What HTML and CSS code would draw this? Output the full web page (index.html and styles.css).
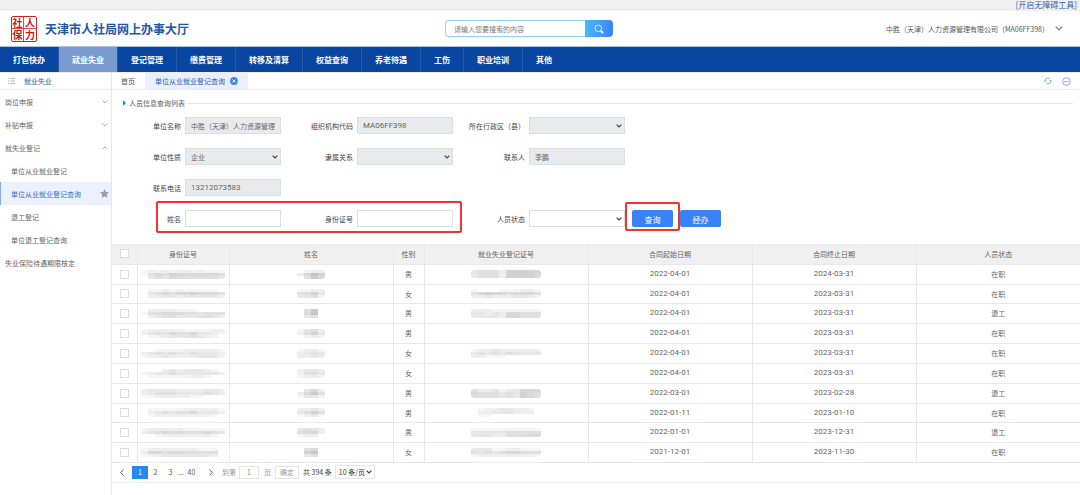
FILE: index.html
```html
<!DOCTYPE html>
<html lang="zh-CN">
<head>
<meta charset="utf-8">
<title>天津市人社局网上办事大厅</title>
<link rel="stylesheet" href="styles.css">
</head>
<body>
<div class="topbar"><a href="#">[开启无障碍工具]</a></div>
<header class="header">
  <div class="seal"><span>社</span><span>人</span><span>保</span><span>力</span></div>
  <h1 class="title">天津市人社局网上办事大厅</h1>
  <form class="search">
    <input type="text" aria-label="搜索" placeholder="请输入您要搜索的内容">
    <button type="button" aria-label="搜索"><svg viewBox="0 0 10 10" width="10" height="10"><circle cx="4.3" cy="4.3" r="3.3" fill="none" stroke="#d5ecff" stroke-width="1"/><path d="M6.8 6.8L9 9" stroke="#fff" stroke-width="1.8"/></svg></button>
  </form>
  <button class="account" type="button">中胜（天津）人力资源管理有限公司（MA06FF398）<svg viewBox="0 0 8 5" width="8" height="5"><path d="M.7.7L4 4 7.3.7" fill="none" stroke="#777" stroke-width="1.1"/></svg></button>
</header>
<nav class="nav">
  <a href="#">打包快办</a><a href="#" class="active">就业失业</a><a href="#">登记管理</a><a href="#">缴费管理</a><a href="#">转移及清算</a><a href="#">权益查询</a><a href="#">养老待遇</a><a href="#">工伤</a><a href="#">职业培训</a><a href="#">其他</a>
</nav>
<div class="layout">
  <aside class="sidebar">
    <div class="side-head"><svg viewBox="0 0 7 6" width="7" height="6"><path d="M0 .5h1.4M2.4.5H7M0 3h1.4M2.4 3H7M0 5.5h1.4M2.4 5.5H7" stroke="#9aa6c0" stroke-width=".8"/></svg><a href="#">就业失业</a></div>
    <a class="item" href="#">岗位申报<svg viewBox="0 0 6 4" width="6" height="4"><path d="M.5.5L3 3 5.5.5"/></svg></a>
    <a class="item" href="#">补贴申报<svg viewBox="0 0 6 4" width="6" height="4"><path d="M.5.5L3 3 5.5.5"/></svg></a>
    <a class="item" href="#">就失业登记<svg class="open" viewBox="0 0 6 4" width="6" height="4"><path d="M1 3L3 1 5 3"/></svg></a>
    <a class="item sub" href="#">单位从业就业登记</a>
    <a class="item sub current" href="#">单位从业就业登记查询<svg class="star" viewBox="0 0 10 10" width="9" height="9"><path d="M5 0L6.5 3.2 10 3.7 7.5 6.2 8.1 9.8 5 8.1 1.9 9.8 2.5 6.2 0 3.7 3.5 3.2Z"/></svg></a>
    <a class="item sub" href="#">退工登记</a>
    <a class="item sub" href="#">单位退工登记查询</a>
    <a class="item" href="#">失业保险待遇期限核定</a>
  </aside>
  <main class="main">
    <div class="tabs">
      <a class="home" href="#">首页</a>
      <a class="tab" href="#">单位从业就业登记查询<svg viewBox="0 0 8 8" width="8" height="8"><circle cx="4" cy="4" r="3.9" fill="#3d84f0"/><path d="M2.6 2.6l2.8 2.8M5.4 2.6L2.6 5.4" stroke="#fff" stroke-width=".9"/></svg></a>
      <div class="tools">
        <button type="button" aria-label="刷新"><svg viewBox="0 0 8 8" width="8" height="8"><path d="M1.2 4.8A2.9 2.9 0 0 1 5.6 1.6M6.8 3.2A2.9 2.9 0 0 1 2.4 6.4" fill="none" stroke="#6f98f0" stroke-width=".9"/><path d="M0 4.6h2.4L1.2 3.2ZM5.6 3.4H8L6.8 4.8Z" fill="#6f98f0"/></svg></button>
        <button type="button" aria-label="更多"><svg viewBox="0 0 10 10" width="9" height="9"><circle cx="5" cy="5" r="4.3" fill="none" stroke="#6f98f0" stroke-width=".9"/><path d="M2.4 5h1.3M4.4 5h1.3M6.3 5h1.3" stroke="#6f98f0" stroke-width="1.2"/></svg></button>
      </div>
    </div>
    <h2 class="section"><svg viewBox="0 0 3 6" width="3" height="6"><path d="M0 0l3 3-3 3z" fill="#2588ee"/></svg>人员信息查询列表</h2>
    <form class="query">
      <label for="f1">单位名称</label><input id="f1" type="text" value="中胜（天津）人力资源管理有限公司" disabled>
      <label for="f2">组织机构代码</label><input id="f2" type="text" class="latin" value="MA06FF398" disabled>
      <label for="f3">所在行政区（县）</label><div class="pick"><select id="f3" disabled><option></option></select><svg viewBox="0 0 6 4" width="6" height="4"><path d="M.6.6L3 3 5.4.6"/></svg></div>
      <label for="f4" class="first">单位性质</label><div class="pick"><select id="f4" disabled><option>企业</option></select><svg viewBox="0 0 6 4" width="6" height="4"><path d="M.6.6L3 3 5.4.6"/></svg></div>
      <label for="f5">隶属关系</label><div class="pick"><select id="f5" disabled><option></option></select><svg viewBox="0 0 6 4" width="6" height="4"><path d="M.6.6L3 3 5.4.6"/></svg></div>
      <label for="f6">联系人</label><input id="f6" type="text" value="李鹏" disabled>
      <label for="f7" class="first">联系电话</label><input id="f7" type="text" class="latin" value="13212073583" disabled>
      <label for="f8" class="first">姓名</label><input id="f8" type="text">
      <label for="f9">身份证号</label><input id="f9" type="text">
      <label for="f10">人员状态</label><div class="pick"><select id="f10"><option></option></select><svg viewBox="0 0 6 4" width="6" height="4"><path d="M.6.6L3 3 5.4.6"/></svg></div>
      <div class="actions"><button type="button">查询</button><button type="button">经办</button></div>
      <i class="mark mark-fields"></i><i class="mark mark-button"></i>
    </form>
    <table class="grid">
      <colgroup><col class="c-check"><col class="c-id"><col><col class="c-sex"><col><col><col><col></colgroup>
      <thead><tr><th><input type="checkbox" aria-label="全选"></th><th>身份证号</th><th>姓名</th><th>性别</th><th>就业失业登记证号</th><th>合同起始日期</th><th>合同终止日期</th><th>人员状态</th></tr></thead>
      <tbody id="rows"></tbody>
    </table>
    <div class="pager">
      <button class="arrow" type="button" aria-label="上一页"><svg viewBox="0 0 4 7" width="4" height="7"><path d="M3.4.6L.7 3.5l2.7 2.9"/></svg></button>
      <a class="page on" href="#">1</a><a class="page" href="#">2</a><a class="page" href="#">3</a><span class="dots">...</span><a class="page" href="#">40</a>
      <button class="arrow next" type="button" aria-label="下一页"><svg viewBox="0 0 4 7" width="4" height="7"><path d="M.6.6l2.7 2.9L.6 6.4"/></svg></button>
      <label for="jump">到第</label><input id="jump" type="text" value="1"><span class="unit">页</span>
      <button class="go" type="button">确定</button>
      <span class="total">共 394 条</span>
      <div class="pick size"><select aria-label="每页条数"><option>10 条/页</option></select><svg viewBox="0 0 6 4" width="6" height="4"><path d="M.6.6L3 3 5.4.6"/></svg></div>
    </div>
  </main>
</div>
<script src="rows.js"></script>
</body>
</html>
```

FILE: styles.css
```css
* { box-sizing: border-box; }
body {
  margin: 0;
  min-height: 100vh;
  display: flex;
  flex-direction: column;
  background: #fff;
  color: #555;
  font: 7px/10px "Noto Sans CJK SC", sans-serif;
}
a { color: inherit; text-decoration: none; }
button, input, select { font: inherit; color: inherit; margin: 0; padding: 0; border-radius: 0; outline: 0; }
button { border: 0; background: none; cursor: pointer; }
svg { display: block; flex: none; }

.topbar { height: 11px; padding-right: 3px; background: #f0f0f0; color: #2a62ae; font-size: 8px; line-height: 9px; text-align: right; }

.header { height: 36px; display: flex; align-items: center; padding: 0 17px 0 11px; border-bottom: 1px solid #a9c1de; }
.seal { width: 26px; height: 26px; display: grid; grid-template-columns: 1fr 1fr; grid-template-rows: 1fr 1fr; border: 1px solid #cf2222; border-radius: 2px; color: #cf1616; font-size: 10px; font-weight: 700; line-height: 11px; text-align: center; }
.seal span:nth-child(odd) { border-right: 1px solid #d94a4a; }
.seal span:nth-child(-n+2) { border-bottom: 1px solid #d94a4a; }
.title { flex: 8 1 0; margin: 0 0 0 8px; color: #1e56a8; font-size: 12px; font-weight: 700; line-height: 24px; white-space: nowrap; }
.search { width: 168px; height: 17px; display: flex; }
.search input { flex: 1; min-width: 0; padding: 0 8px; border: 1px solid #8bd5fb; border-right: 0; border-radius: 4px 0 0 4px; color: #666; }
.search input::placeholder { color: #777; }
.search button { width: 28px; display: grid; place-items: center; border-radius: 0 4px 4px 0; background: linear-gradient(90deg, #49b8fc, #3a84f7); }
.account { flex: 9 1 0; display: flex; align-items: center; justify-content: flex-end; gap: 6px; color: #555; white-space: nowrap; }

.nav { height: 25px; display: flex; background: #0846a2; color: #fff; font-size: 8px; font-weight: 700; line-height: 25px; }
.nav a { padding: 0 13px; border-right: 1px solid #2459ac; white-space: nowrap; }
.nav a:last-child { border: 0; }
.nav .active { background: #7a9bd0; }

.layout { flex: 1; display: flex; }
.sidebar { width: 112px; flex: none; border-right: 1px solid #e6e6e6; }
.side-head { height: 18px; display: flex; align-items: center; gap: 9px; padding-left: 8px; border: 1px solid #ececec; border-width: 1px 0; color: #2d61b0; }
.item { height: 23px; display: flex; align-items: center; justify-content: space-between; padding: 0 3px 0 5px; color: #666; }
.item path { fill: none; stroke: #999; stroke-width: .8; }
.item.sub { padding: 0 2px 0 9px; border-left: 2px solid transparent; }
.item.current { background: #ebf2fe; border-left: 1px solid #82aaf2; padding-left: 10px; color: #3d70c4; }
.item .star path { fill: #9b9da2; stroke: none; }

.main { flex: 1; min-width: 0; }
.tabs { height: 18px; display: flex; align-items: center; border: 1px solid #ececec; border-width: 1px 0; }
.home { padding: 0 10px 0 9px; }
.tab { height: 16px; display: flex; align-items: center; gap: 5px; padding: 0 10px; background: #e9f0fc; color: #2d61b0; }
.tools { margin-left: auto; padding-right: 9px; display: flex; align-items: center; gap: 10px; }

.section { display: flex; align-items: center; gap: 3px; margin: 8px 7px 0 11px; color: #777; font-size: 7px; font-weight: 500; line-height: 10px; }
.section::after { content: ""; flex: 1; height: 1px; background: #e6e6e6; }

.query { position: relative; display: grid; grid-template-columns: 69px 96px 68px 96px 68px 96px 1fr; column-gap: 4px; row-gap: 14px; grid-auto-rows: 17px; align-items: center; padding: 9px 0 17px; }
.query > label { text-align: right; color: #444; white-space: nowrap; }
.query .first { grid-column: 1; }
.query > input, .query select { width: 100%; height: 17px; padding: 0 5px; border: 1px solid #dcdfe2; background: #fff; color: #666; }
.query > input:disabled, .query select:disabled { background: #e8ebee; color: #666; opacity: 1; }
.query .latin { font: 8px/10px "Roboto", "Noto Sans CJK SC", sans-serif; }
.pick { position: relative; }
.pick select { display: block; appearance: none; }
.pick svg { position: absolute; right: 3px; top: 50%; margin-top: -2px; pointer-events: none; }
.pick path { fill: none; stroke: #444; stroke-width: 1.2; }
.actions { display: flex; gap: 7px; padding-left: 3px; }
.actions button { width: 41px; height: 17px; padding-top: 3px; border-radius: 2px; background: #3a82f7; color: #fff; font-size: 8px; line-height: 12px; }
.mark { position: absolute; border: 2px solid #f0342a; border-radius: 2px; pointer-events: none; }
.mark-fields { left: 44px; bottom: 11px; width: 306px; height: 32px; }
.mark-button { left: 513px; bottom: 13px; width: 55px; height: 29px; }

.grid { width: 100%; table-layout: fixed; border-collapse: collapse; color: #666; text-align: center; }
.c-check { width: 25px; }
.c-id { width: 92px; }
.c-sex { width: 31px; }
.grid th, .grid td { height: 20px; padding: 0; border: 1px solid #e8e8e8; border-width: 0 1px 1px 0; font-weight: 400; }
.grid th { background: #f0f0f0; }
.grid th:last-child, .grid td:last-child { border-right: 0; }
.grid tbody tr:nth-child(6n+2) td { height: 19px; }
.grid .date { font: 8px/10px "Roboto", sans-serif; }
.grid svg { margin: 0 auto; border-radius: 3px; }
.grid input { display: block; width: 9px; height: 9px; margin: 0 auto; appearance: none; border: 1px solid #dcdcdc; background: #fff; }

.pager { height: 20px; display: flex; align-items: center; border-bottom: 1px solid #ececec; padding-left: 8px; }
.arrow { width: 5px; margin-right: 7px; }
.arrow path { fill: none; stroke: #555; stroke-width: 1; }
.page { width: 15px; text-align: center; }
.page.on { width: 16px; background: #2888f2; color: #fff; line-height: 13px; }
.dots { width: 6px; }
.next { margin: 0 8px 0 10px; }
.pager label, .unit, .go { color: #999; }
.pager > input { width: 20px; height: 13px; margin: 0 5px 0 3px; border: 1px solid #e4e4e4; text-align: center; color: #888; }
.go { width: 24px; height: 13px; margin: 0 4px 0 4px; border: 1px solid #e4e4e4; }
.total { color: #444; margin-right: 3px; white-space: nowrap; }
.size select { width: 40px; height: 14px; padding-left: 3px; border: 1px solid #e4e4e4; background: #fff; color: #333; }
```

FILE: rows.js
```js
// Masked cells: every string is one line of shade levels, one digit per tile.
const rows = [
  [["121212212111", "145465555554", "034354444443"], ["0122", "2586", "0475"], "男", ["3444266665", "3444266665"], "2022-04-01", "2024-03-31", "在职"],
  [["011212111110", "034545565554", "022332333332"], ["1122", "4463", "3341"], "女", ["1000111221", "4565545554", "2232223321"], "2022-04-01", "2023-03-31", "在职"],
  [["022221110000", "144555443444", "023443334432"], ["0470", "0580", "0340"], "男", ["2221111111", "3323255444", "3333255444"], "2022-04-01", "2023-03-31", "退工"],
  [["122222111122", "234354453321", "011233343210"], ["1342", "2463", "0121"], "男", [], "2022-04-01", "2023-03-31", "在职"],
  [["001111222221", "234343343332", "122322223332"], ["1221", "2343", "2232"], "女", ["1223222222", "3434343333", "2211100000"], "2022-04-01", "2023-03-31", "在职"],
  [["000232333210", "123343333332", "011111122100"], ["2332", "2443", "1221"], "女", [], "2022-04-01", "2023-03-31", "在职"],
  [["233332222332", "234443333432", "112222211000"], ["0352", "2574", "1331"], "男", ["4223123555", "5444343654", "4444343654"], "2022-03-01", "2023-02-28", "退工"],
  [["011111222221", "023434453332", "012222222210"], ["2232", "3464", "1231"], "男", ["0122332210", "0223332220", "0110000000"], "2022-01-11", "2023-01-10", "在职"],
  [["122222111111", "234545444543", "001222222210"], ["3432", "4552", "1220"], "男", ["1111111111", "3333344444", "3332244455"], "2022-01-01", "2023-12-31", "退工"],
  [["122222221110", "255455444440", "122333333320"], ["0450", "0670", "0340"], "女", ["3331122111", "4343455444", "1222222221"], "2021-12-01", "2023-11-30", "在职"]
];

function mask(lines) {
  if (!lines.length) return "";
  const width = lines[0].length * 7;
  const step = lines.length === 2 ? 4 : 3;
  const height = step * lines.length;
  let tiles = "";
  lines.forEach((line, y) => [...line].forEach((level, x) => {
    if (level === "0") return;
    const shade = 252 - level * 7;
    tiles += `<rect x="${x * 7}" y="${y * step}" width="7" height="${step}" fill="rgb(${shade},${shade},${shade})"/>`;
  }));
  return `<svg width="${width}" height="${height}" viewBox="0 0 ${width} ${height}" aria-hidden="true">${tiles}</svg>`;
}

document.getElementById("rows").innerHTML = rows.map(([id, name, sex, cert, start, end, state], i) =>
  `<tr><td><input type="checkbox" aria-label="选择第${i + 1}行"></td><td>${mask(id)}</td><td>${mask(name)}</td><td>${sex}</td><td>${mask(cert)}</td><td class="date">${start}</td><td class="date">${end}</td><td>${state}</td></tr>`
).join("");
```
